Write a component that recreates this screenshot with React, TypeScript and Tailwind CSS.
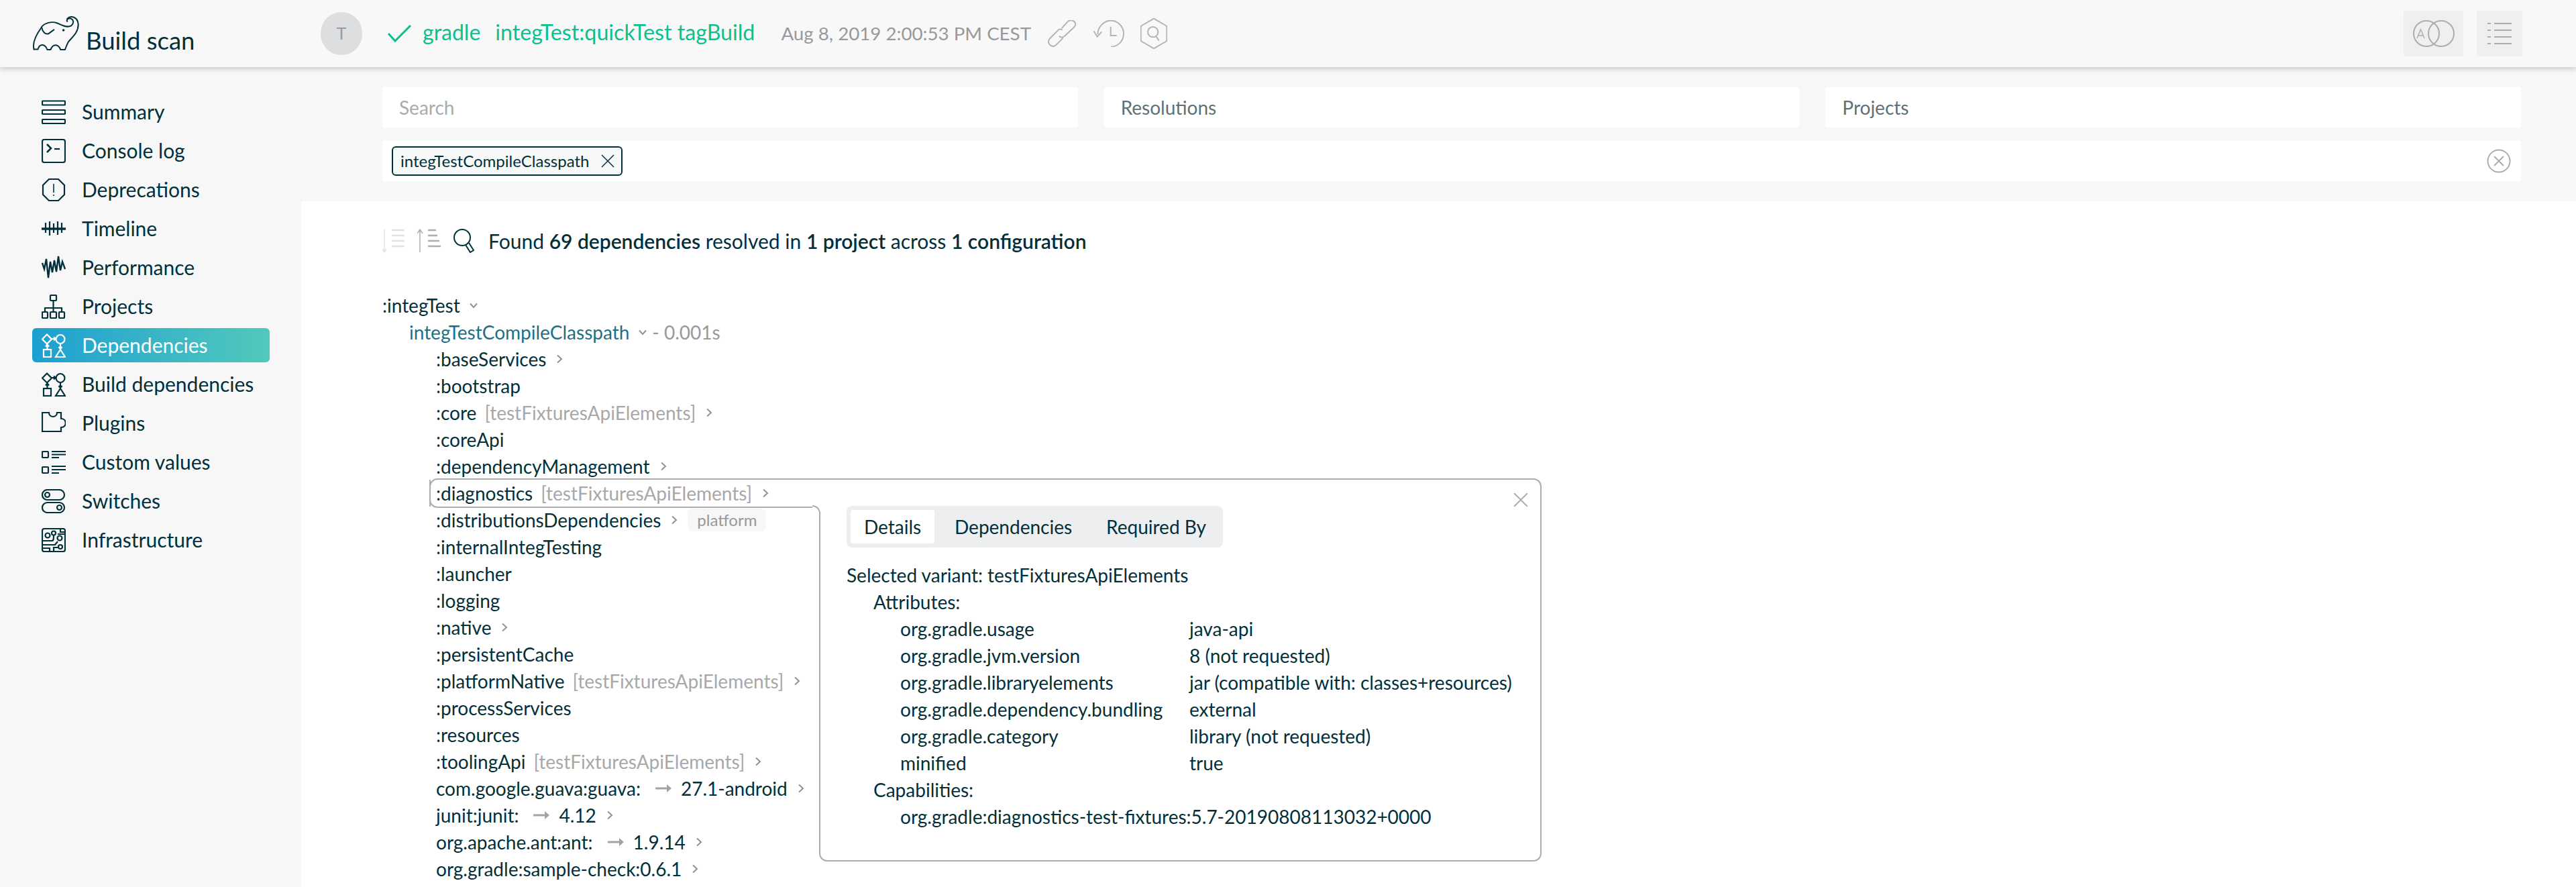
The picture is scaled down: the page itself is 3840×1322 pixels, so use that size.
import React from "react";

function Svg({ children }: { children: React.ReactNode }) {
  return (
    <svg width={36} height={36} viewBox="0 0 36 36" fill="none" stroke="currentColor" strokeWidth={2.2} className="shrink-0">
      {children}
    </svg>
  );
}

const Chevron = ({ down }: { down?: boolean }) => (
  <svg width="12" height="14" viewBox="0 0 12 14" fill="none" stroke="#8a9499" strokeWidth={2} className="shrink-0">
    {down ? <path d="M1 4.5 L6 10 L11 4.5" /> : <path d="M3 1.5 L9 7 L3 12.5" />}
  </svg>
);

const Arrow = () => (
  <svg width="24" height="14" viewBox="0 0 24 14" className="shrink-0" fill="#a3a3a3">
    <path d="M0 5.5 H17 V1 L24 7 L17 13 V8.5 H0 Z" />
  </svg>
);

const icons: Record<string, React.ReactNode> = {
  Summary: (
    <Svg>
      <rect x="1" y="1.500" width="34" height="6" rx="1" />
      <rect x="1" y="15" width="34" height="6" rx="1" />
      <rect x="1" y="29" width="34" height="6" rx="1" />
    </Svg>
  ),
  "Console log": (
    <Svg>
      <rect x="1" y="1" width="34" height="34" rx="3" />
      <path d="M8 8 L14 14 L8 20" strokeWidth={2.6} />
      <path d="M19 15 H27" />
    </Svg>
  ),
  Deprecations: (
    <Svg>
      <path d="M11 2 H25 L34 11 V25 L25 34 H11 L2 25 V11 Z" />
      <path d="M18 9 V22 M18 25 V27" strokeWidth={1.600} />
    </Svg>
  ),
  Timeline: (
    <Svg>
      <path d="M0 18 H36" strokeWidth={3.500} />
      <path d="M6 9 V24 M12 7 V28 M18 10 V24 M24 7 V27 M30 9 V24" />
    </Svg>
  ),
  Performance: (
    <Svg>
      <path d="M1 11 L4 20 L7 5 L10 33 L13 9 L16 25 L19 7 L22 24 L25 1 L28 22 L31 9 L35 20" strokeWidth={2.400} />
    </Svg>
  ),
  Projects: (
    <Svg>
      <rect x="13" y="1" width="9" height="8" rx="1" />
      <path d="M17.500 9 V20 M5 26 V20 H30 V26" />
      <path d="M17.500 20 V26" />
      <rect x="1" y="26" width="8" height="9" rx="1" />
      <rect x="13" y="26" width="9" height="9" rx="1" />
      <rect x="26" y="26" width="8" height="9" rx="1" />
    </Svg>
  ),
  deps: (
    <Svg>
      <path d="M8 1.500 L15 8.500 L8 15.500 L1 8.500 Z" />
      <circle cx="28" cy="8.500" r="6.500" />
      <path d="M15 8 H21 M18 5.500 L21 8 L18 10.500" />
      <rect x="3" y="24" width="11" height="11" />
      <path d="M8.500 24 V17 M6 19.500 L8.500 16.500 L11 19.500" />
      <path d="M28 24 L35 35 H21 Z" />
      <path d="M28 15 V24 M25.500 20 L28 23 L30.500 20" />
    </Svg>
  ),
  Plugins: (
    <Svg>
      <path d="M1 2 H11 C11 10 23 10 23 2 H29 V11 C38 11 38 24 29 24 V30 H1 Z" />
    </Svg>
  ),
  "Custom values": (
    <Svg>
      <rect x="1" y="2" width="9" height="9" rx="1" />
      <path d="M15 2 H36 M15 6.500 H36 M15 11 H26" />
      <rect x="1" y="25" width="9" height="9" rx="1" />
      <path d="M15 24 H36 M15 29 H36 M15 34 H26" />
    </Svg>
  ),
  Switches: (
    <Svg>
      <rect x="1" y="1" width="33" height="15" rx="7.500" />
      <circle cx="8.500" cy="8.500" r="3.500" />
      <rect x="1" y="20" width="33" height="15" rx="7.500" />
      <circle cx="26.500" cy="27.500" r="3.500" />
    </Svg>
  ),
  Infrastructure: (
    <Svg>
      <rect x="1" y="1" width="34" height="34" rx="3" />
      <circle cx="9" cy="11" r="3.500" />
      <circle cx="18" cy="7.500" r="3" />
      <circle cx="27" cy="15" r="3.500" />
      <circle cx="28" cy="28" r="3" />
      <path d="M1 19 H15 C18 19 18 16 18 11 M1 25 H20 L24 20 M1 30 H12 V35 M18 35 V29 H25 M28 1 V6 H35 M24 9 H35" />
    </Svg>
  ),
};

const nav = [
  ["Summary", "Summary"],
  ["Console log", "Console log"],
  ["Deprecations", "Deprecations"],
  ["Timeline", "Timeline"],
  ["Performance", "Performance"],
  ["Projects", "Projects"],
  ["Dependencies", "deps"],
  ["Build dependencies", "deps"],
  ["Plugins", "Plugins"],
  ["Custom values", "Custom values"],
  ["Switches", "Switches"],
  ["Infrastructure", "Infrastructure"],
];

function Sidebar() {
  return (
    <aside className="w-[449px] shrink-0 pt-[41px] pl-[48px]">
      {nav.map(([label, key]) => {
        const active = label === "Dependencies";
        return (
          <div
            key={label}
            className={
              active
                ? "w-[354px] h-[51px] mb-[7px] pl-[14px] flex items-center gap-[24px] rounded-[6px] text-white text-[30px] bg-gradient-to-r from-[#1b9fd0] to-[#51c9bb]"
                : "w-[354px] h-[51px] mb-[7px] pl-[14px] flex items-center gap-[24px] rounded-[6px] text-[#02303a] text-[30px]"
            }
          >
            {icons[key]}
            <span>{label}</span>
          </div>
        );
      })}
    </aside>
  );
}

function Logo() {
  return (
    <svg width="70" height="54" viewBox="22 26 212 162" fill="none" stroke="#02303a" strokeWidth={6} strokeLinecap="round" strokeLinejoin="round" className="shrink-0">
      <path d="M30 178 C22 150 42 110 62 82 C72 60 110 50 135 60 C155 70 180 82 198 72 C212 60 210 42 192 38 C182 38 176 46 180 52" />
      <path d="M180 40 C195 24 228 30 230 66 C230 105 200 125 185 145 C178 158 174 170 170 180 L150 180 C140 152 115 152 105 180 L90 180 C80 152 55 152 48 178 L30 178" />
      <path d="M66 82 C68 100 82 112 95 108 L120 90" />
      <circle cx="163" cy="92" r="2.500" />
    </svg>
  );
}

function Header() {
  return (
    <header className="h-[100px] shrink-0 relative z-10 bg-[#f8f8f9] shadow-[0_2px_8px_rgba(0,0,0,0.22)] flex items-center">
      <div className="ml-[48px] w-[430px] h-[100px] flex items-center gap-[10px] text-[#02303a]">
        <Logo />
        <span className="text-[36.500px] leading-[46px] mt-[20px]">Build scan</span>
      </div>
      <div className="w-[62px] h-[64px] rounded-full bg-[#dcdee0] text-[#9a9a9a] text-[25px] flex items-center justify-center">T</div>
      <svg width="36" height="26" viewBox="0 0 36 26" fill="none" stroke="#0ac18e" strokeWidth={3} className="ml-[38px] shrink-0">
        <path d="M1 13 L11 24 L34 1" />
      </svg>
      <span className="ml-[16px] text-[#0ac18e] text-[32px] leading-none -mt-[4px]">gradle</span>
      <span className="ml-[22px] text-[#0ac18e] text-[32.200px] leading-none -mt-[4px]">integTest:quickTest tagBuild</span>
      <span className="ml-[39px] text-[#999999] text-[27.700px] leading-none">Aug 8, 2019 2:00:53 PM CEST</span>
      <svg width="42" height="40" viewBox="20 44 126 120" fill="none" stroke="#b4b4b4" strokeWidth={6} className="ml-[25px] shrink-0">
        <path d="M85 88 C78 82 70 84 65 90 L30 125 C18 137 22 150 32 157 C42 164 52 160 58 154 L88 124" />
        <path d="M70 115 C78 122 88 122 95 115 L135 78 C148 65 145 55 135 48 C125 42 115 45 108 52 L82 80" />
      </svg>
      <svg width="47" height="40" viewBox="218 46 141 120" fill="none" stroke="#b4b4b4" strokeWidth={6} className="ml-[25px] shrink-0">
        <path d="M240 110 C240 75 270 48 298 48 C330 48 356 75 356 106 C356 140 330 165 298 165" />
        <path d="M222 95 L238 120 L258 98" />
        <path d="M298 75 V115 H325" />
      </svg>
      <svg width="40" height="46" viewBox="432 36 120 138" fill="none" stroke="#b4b4b4" strokeWidth={6} className="ml-[24px] shrink-0">
        <path d="M492 38 L550 72 V138 L492 172 L434 138 V72 Z" />
        <circle cx="488" cy="98" r="23" />
        <path d="M500 115 L515 137" />
      </svg>
      <div className="ml-auto flex items-center gap-[20px] mr-[80px]">
        <div className="w-[89px] h-[68px] rounded-[3px] bg-[#edeff1] flex items-center justify-center">
          <svg width="64" height="42" viewBox="0 0 64 42" fill="none" stroke="#adadad" strokeWidth={2}>
            <circle cx="21" cy="21" r="19" />
            <circle cx="43" cy="21" r="19" />
            <path d="M7 28 L12.500 15 L18 28 M9 24 H16" strokeWidth={1.500} />
          </svg>
        </div>
        <div className="w-[68px] h-[68px] rounded-[3px] bg-[#edeff1] flex items-center justify-center">
          <svg width="36" height="32" viewBox="0 0 36 32" fill="none" stroke="#adadad" strokeWidth={2}>
            <path d="M0 1 H5 M10 1 H36 M0 11 H5 M10 11 H36 M0 21 H5 M10 21 H36 M0 31 H5 M10 31 H36" />
          </svg>
        </div>
      </div>
    </header>
  );
}

function Filters() {
  return (
    <div className="h-[200px] shrink-0 pt-[30px] pl-[121px] pr-[82px]">
      <div className="flex gap-[39px] text-[28px]">
        <div className="flex-1 h-[60px] bg-white rounded-[3px] pl-[25px] flex items-center text-[#ababab]">Search</div>
        <div className="flex-1 h-[60px] bg-white rounded-[3px] pl-[25px] flex items-center text-[#5f7178]">Resolutions</div>
        <div className="flex-1 h-[60px] bg-white rounded-[3px] pl-[25px] flex items-center text-[#5f7178]">Projects</div>
      </div>
      <div className="mt-[20px] h-[60px] bg-white rounded-[3px] pl-[14px] pr-[15px] flex items-center justify-between">
        <div className="h-[44px] pl-[11px] pr-[10px] border-2 border-[#02303a] rounded-[6px] bg-[#f7f8f8] flex items-center gap-[18px] text-[24px] text-[#02303a]">
          <span>integTestCompileClasspath</span>
          <svg width="20" height="20" viewBox="0 0 20 20" fill="none" stroke="#02303a" strokeWidth={1.500}>
            <path d="M1 1 L19 19 M19 1 L1 19" />
          </svg>
        </div>
        <svg width="36" height="36" viewBox="0 0 36 36" fill="none" stroke="#adadad" strokeWidth={2}>
          <circle cx="18" cy="18" r="16.500" />
          <path d="M11 11 L25 25 M25 11 L11 25" />
        </svg>
      </div>
    </div>
  );
}

function Toolbar() {
  return (
    <div className="h-[36px] flex items-center text-[#02303a] text-[30px]">
      <svg width="34" height="36" viewBox="0 0 34 36" fill="none" stroke="#e2e2e2" strokeWidth={2.500} className="shrink-0">
        <path d="M3 1 V34 M0 30 L3 35 L6 30" strokeWidth={1.500} />
        <path d="M14 2 H33 M14 10 H33 M14 18 H33 M14 26 H33" />
      </svg>
      <svg width="36" height="36" viewBox="0 0 36 36" fill="none" stroke="#adadad" strokeWidth={2.500} className="ml-[18px] shrink-0">
        <path d="M4 2 V35 M0 7 L4 1 L8 7" strokeWidth={1.500} />
        <path d="M16 2 H28 M16 10 H30 M16 18 H33 M16 26 H35" />
      </svg>
      <svg width="32" height="36" viewBox="0 0 32 36" fill="none" stroke="#02303a" strokeWidth={2} className="ml-[17px] shrink-0">
        <circle cx="14" cy="13" r="12" />
        <path d="M19 24 L26 35 L31 32 L24 21" />
      </svg>
      <span className="ml-[21px] whitespace-pre">
        Found <b className="font-semibold">69 dependencies</b> resolved in <b className="font-semibold">1 project</b> across <b className="font-semibold">1 configuration</b>
      </span>
    </div>
  );
}

const VAR = "[testFixturesApiElements]";
type Row = { n: string; v?: boolean; c?: boolean; badge?: boolean; arrow?: string };
const rows: Row[] = [
  { n: ":baseServices", c: true },
  { n: ":bootstrap" },
  { n: ":core", v: true, c: true },
  { n: ":coreApi" },
  { n: ":dependencyManagement", c: true },
  { n: ":diagnostics", v: true, c: true },
  { n: ":distributionsDependencies", c: true, badge: true },
  { n: ":internalIntegTesting" },
  { n: ":launcher" },
  { n: ":logging" },
  { n: ":native", c: true },
  { n: ":persistentCache" },
  { n: ":platformNative", v: true, c: true },
  { n: ":processServices" },
  { n: ":resources" },
  { n: ":toolingApi", v: true, c: true },
  { n: "com.google.guava:guava:", arrow: "27.1-android", c: true },
  { n: "junit:junit:", arrow: "4.12", c: true },
  { n: "org.apache.ant:ant:", arrow: "1.9.14", c: true },
  { n: "org.gradle:sample-check:0.6.1", c: true },
];

const attrs = [
  ["org.gradle.usage", "java-api"],
  ["org.gradle.jvm.version", "8 (not requested)"],
  ["org.gradle.libraryelements", "jar (compatible with: classes+resources)"],
  ["org.gradle.dependency.bundling", "external"],
  ["org.gradle.category", "library (not requested)"],
  ["minified", "true"],
];

function DetailPanel() {
  return (
    <div className="absolute left-[70px] top-[-2px] w-[1658px] h-[571px]">
      <div className="h-[42px] border-2 border-b-0 border-[#adadad] rounded-tl-[12px] rounded-tr-[12px] relative">
        <div className="absolute left-[-2px] top-0 w-[571px] h-[42px] border-2 border-t-0 border-r-0 border-[#adadad] rounded-bl-[12px]" />
        <svg width="22" height="20" viewBox="0 0 22 20" fill="none" stroke="#adadad" strokeWidth={2} className="absolute right-[18px] top-[20px]">
          <path d="M1 0 L21 20 M21 0 L1 20" />
        </svg>
      </div>
      <div className="absolute left-[571px] top-[40px] w-[12px] h-[12px] border-t-2 border-r-2 border-[#adadad] rounded-tr-[12px]" />
      <div className="absolute right-0 top-[40px] w-[2px] h-[14px] bg-[#adadad]" />
      <div className="flow-root ml-[581px] mt-[10px] h-[519px] bg-white border-2 border-t-0 border-[#adadad] rounded-bl-[12px] rounded-br-[12px] pl-[39px] text-[28px] leading-[40px] text-[#02303a]">
        <div className="w-[561px] h-[62px] mt-[-11px] rounded-[8px] bg-[#eceef0] flex items-center pl-[6px]">
          <div className="w-[125px] h-[50px] rounded-[4px] bg-white pl-[20px] flex items-center">Details</div>
          <span className="ml-[30px]">Dependencies</span>
          <span className="ml-[51px]">Required By</span>
        </div>
        <div className="mt-[21px]">Selected variant: testFixturesApiElements</div>
        <div className="pl-[40px]">Attributes:</div>
        <div className="pl-[80px] grid grid-cols-[431px_1fr]">
          {attrs.map(([k, v]) => (
            <React.Fragment key={k}>
              <span>{k}</span>
              <span className="whitespace-nowrap">{v}</span>
            </React.Fragment>
          ))}
        </div>
        <div className="pl-[40px]">Capabilities:</div>
        <div className="pl-[80px]">org.gradle:diagnostics-test-fixtures:5.7-20190808113032+0000</div>
      </div>
    </div>
  );
}

function Tree() {
  return (
    <div className="mt-[58px] text-[28px] leading-[40px] text-[#02303a]">
      <div className="h-[40px] flex items-center gap-[14px]">
        <span>:integTest</span>
        <Chevron down />
      </div>
      <div className="h-[40px] pl-[40px] flex items-center">
        <span className="text-[#1d7086]">integTestCompileClasspath</span>
        <span className="ml-[14px]"><Chevron down /></span>
        <span className="ml-[8px] text-[#999999]">- 0.001s</span>
      </div>
      {rows.map((r) => (
        <div key={r.n} className="relative h-[40px] pl-[80px] flex items-center whitespace-nowrap">
          <span>{r.n}</span>
          {r.v && <span className="ml-[12px] text-[#a8a8a8]">{VAR}</span>}
          {r.arrow && (
            <>
              <span className="ml-[22px]"><Arrow /></span>
              <span className="ml-[14px]">{r.arrow}</span>
            </>
          )}
          {r.c && <span className="ml-[14px]"><Chevron /></span>}
          {r.badge && <span className="ml-[14px] w-[117px] h-[34px] pl-[14px] rounded-[8px] bg-[#f6f7f7] text-[#999999] text-[24px] flex items-center">platform</span>}
          {r.n === ":diagnostics" && <DetailPanel />}
        </div>
      ))}
    </div>
  );
}

export default function App() {
  return (
    <div className="w-full h-[1322px] overflow-hidden flex flex-col bg-[#f7f7f8] text-[#02303a] [font-family:Lato,sans-serif] [font-variant-ligatures:common-ligatures]">
      <Header />
      <div className="flex-1 flex min-h-0">
        <Sidebar />
        <main className="flex-1 min-w-0 flex flex-col">
          <Filters />
          <div className="flex-1 bg-white pt-[41px] pl-[121px]">
            <Toolbar />
            <Tree />
          </div>
        </main>
      </div>
    </div>
  );
}
